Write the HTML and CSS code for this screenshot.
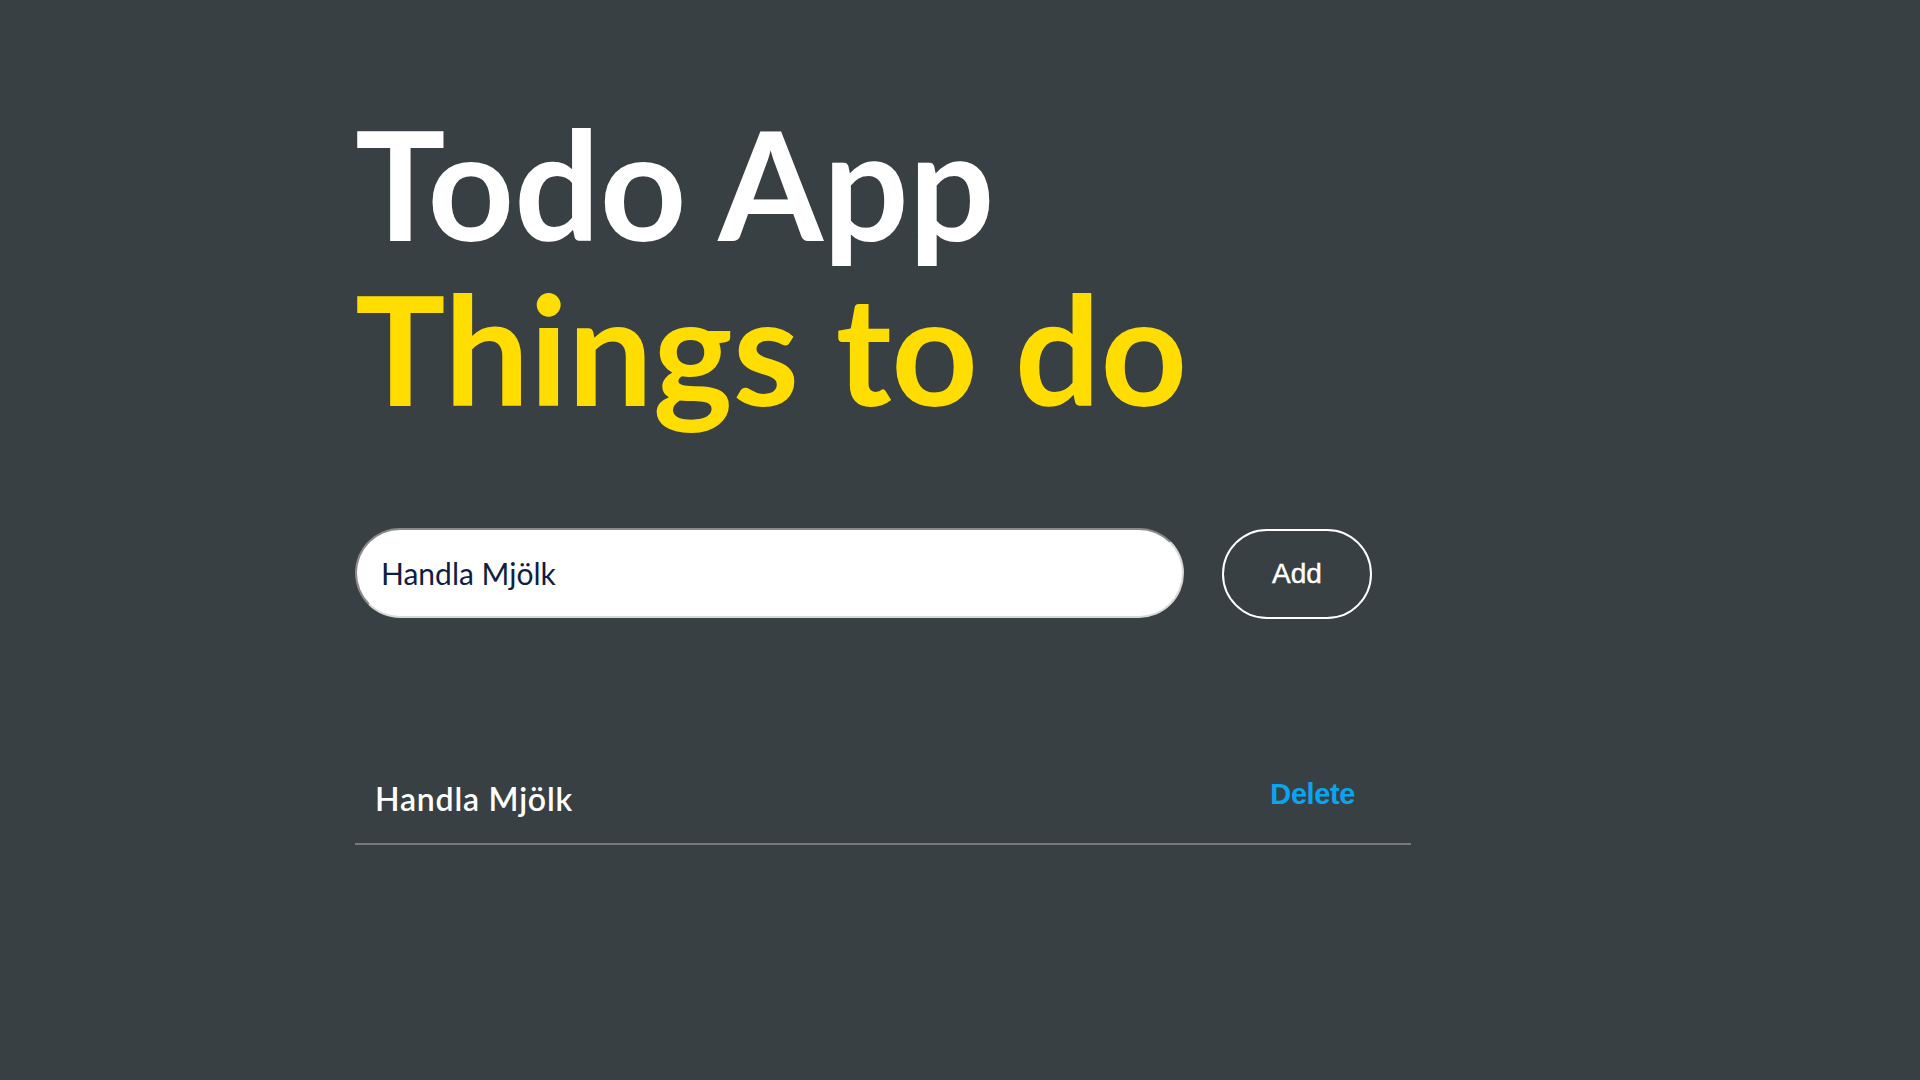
FILE: index.html
```html
<!DOCTYPE html>
<html lang="sv">
<head>
<meta charset="utf-8">
<title>Todo App</title>
<link rel="stylesheet" href="styles.css">
</head>
<body>
<main class="app">
  <h1 class="title">
    <span class="title-main">Todo App</span>
    <span class="title-sub">Things to do</span>
  </h1>
  <form class="todo-form">
    <input class="todo-input" type="text" value="Handla Mjölk">
    <button class="add-btn" type="button">Add</button>
  </form>
  <ul class="todo-list">
    <li class="todo-item">
      <span class="todo-text">Handla Mjölk</span>
      <button class="delete-btn" type="button">Delete</button>
    </li>
  </ul>
</main>
</body>
</html>
```

FILE: styles.css
```css
html, body {
  margin: 0;
  padding: 0;
}

body {
  background: #394044;
  min-height: 100vh;
  font-family: Lato, "Noto Sans", sans-serif;
}

.app {
  width: 1056px;
  padding: 100px 0 0 355px;
}

.title {
  margin: 0;
  font-family: Lato, sans-serif;
  font-weight: 700;
  font-size: 151px;
  line-height: 165px;
}

.title-main {
  display: block;
  color: #ffffff;
}

.title-sub {
  display: block;
  color: #ffdd00;
}

.todo-form {
  display: flex;
  align-items: center;
  gap: 38px;
  margin: 97px 0 0 0;
}

.todo-input {
  box-sizing: border-box;
  width: 829px;
  height: 90px;
  padding: 0 24px;
  border-radius: 45px;
  border-style: solid;
  border-width: 2px;
  border-color: #8a8a8a #d8d8d8 #d8d8d8 #8a8a8a;
  background: #ffffff;
  color: #0f1e45;
  font-family: Lato, sans-serif;
  font-size: 30px;
  outline: none;
}

.add-btn {
  box-sizing: border-box;
  width: 150px;
  height: 90px;
  margin-top: 2px;
  border: 2px solid #ffffff;
  border-radius: 45px;
  background: transparent;
  color: #ffffff;
  font-family: "Liberation Sans", Arial, sans-serif;
  font-size: 28px;
  -webkit-text-stroke: 0.4px #ffffff;
  padding: 0;
}

.todo-list {
  list-style: none;
  margin: 132px 0 0 0;
  padding: 0;
}

.todo-item {
  display: flex;
  align-items: center;
  justify-content: space-between;
  padding: 27px 56px 23px 20px;
  border-bottom: 2px solid #777a7c;
}

.todo-text {
  color: #ffffff;
  font-family: Lato, sans-serif;
  font-size: 32px;
  font-weight: 600;
  letter-spacing: 0.8px;
  line-height: 1.2;
}

.delete-btn {
  border: none;
  background: transparent;
  padding: 0;
  margin-bottom: 10px;
  color: #0aa5f0;
  font-family: "Liberation Sans", Arial, sans-serif;
  font-weight: 700;
  font-size: 29px;
  letter-spacing: -0.4px;
  line-height: 1.117;
}
```
